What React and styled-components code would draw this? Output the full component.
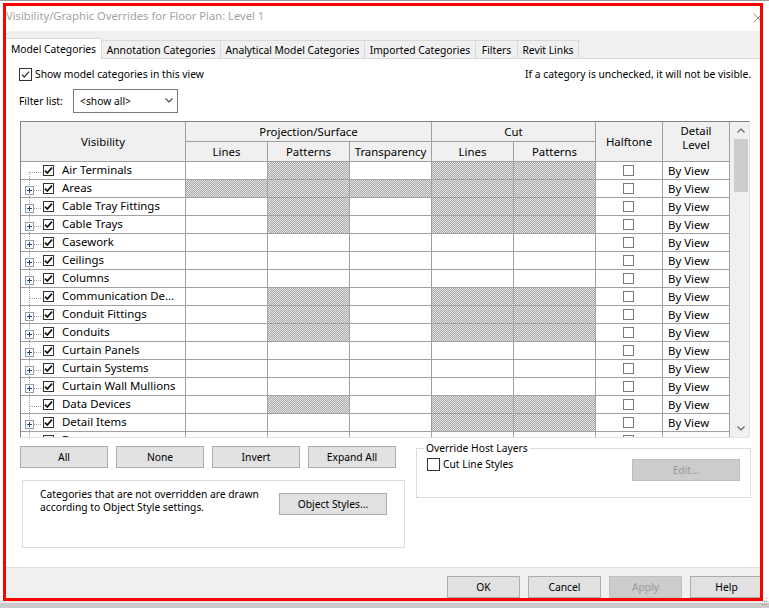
import React from 'react';
import styled, { createGlobalStyle } from 'styled-components';

const Global = createGlobalStyle`
  html, body { margin: 0; padding: 0; background: #fff; }
  body { font-family: "Noto Sans", "Liberation Sans", sans-serif; color: #000; }
  *, *::before, *::after { box-sizing: border-box; }
`;

const UI_FONT = '10.3px';
const GRID_FONT = '11.4px';

const Page = styled.div`
  position: relative;
  width: 769px;
  height: 608px;
  overflow: hidden;
  background: #fff;
  display: flex;
  flex-direction: column;
`;

const ScreenTop = styled.div`
  flex: none;
  height: 3px;
  border-top: 1px solid #9b9b9b;
`;

const ScreenBottom = styled.div`
  flex: 1;
  background: linear-gradient(#e6e6e6 0 2px, #cacaca 2px);
`;

const Dialog = styled.div`
  flex: none;
  margin-left: 3px;
  width: 760px;
  height: 598px;
  background: #fff;
  display: flex;
  flex-direction: column;
  font-size: ${UI_FONT};
`;

const TitleBar = styled.div`
  flex: none;
  height: 28px;
  display: flex;
  align-items: flex-start;
  justify-content: space-between;
  padding-left: 3px;
`;

const Title = styled.div`
  color: #a3a3a3;
  font-size: 11.2px;
  line-height: 14px;
  margin-top: 6px;
`;

const CloseIcon = styled.svg`
  margin-top: 10px;
  width: 10px;
  height: 10px;
`;

const TabStrip = styled.div`
  flex: none;
  height: 28px;
  background: #f0f0f0;
  border-bottom: 1px solid #d9d9d9;
  display: flex;
  align-items: flex-end;
`;

const Tab = styled.div`
  flex: none;
  width: ${p => p.$w}px;
  height: ${p => (p.$active ? 21 : 18)}px;
  margin-bottom: ${p => (p.$active ? -1 : 0)}px;
  background: ${p => (p.$active ? '#fff' : '#f0f0f0')};
  border-top: 1px solid #d9d9d9;
  border-right: 1px solid #d9d9d9;
  display: flex;
  align-items: center;
  justify-content: center;
  padding-top: ${p => (p.$active ? 0 : 1)}px;
  padding-left: ${p => (p.$active ? 3 : 0)}px;
  white-space: nowrap;
  line-height: 14px;
`;

const Content = styled.div`
  flex: 1;
  display: flex;
  flex-direction: column;
  padding: 0 12px 0 17px;
  background: #fff;
`;

const TopRow = styled.div`
  margin-top: 9px;
  height: 13px;
  display: flex;
  align-items: center;
  justify-content: space-between;
  line-height: 13px;
`;

const CheckLabel = styled.label`
  display: flex;
  align-items: center;
  gap: 3px;
  margin-left: -1px;
  white-space: nowrap;
`;

const Box = styled.span`
  flex: none;
  display: inline-flex;
  align-items: center;
  justify-content: center;
  width: ${p => p.$size}px;
  height: ${p => p.$size}px;
  border: 1px solid ${p => p.$border || '#333'};
  background: #fff;
`;

const HalftoneBox = styled(Box)`
  margin-right: 2px;
`;

const Note = styled.span`
  white-space: nowrap;
`;

const FilterRow = styled.div`
  margin-top: 8px;
  height: 24px;
  display: flex;
  align-items: center;
`;

const FilterLabel = styled.span`
  width: 54px;
  margin-left: -1px;
`;

const Select = styled.div`
  width: 105px;
  height: 24px;
  border: 1px solid #7a7a7a;
  display: flex;
  align-items: center;
  justify-content: space-between;
  padding: 0 4px 1px 6px;
`;

const TableFrame = styled.div`
  margin-top: 8px;
  width: 730px;
  height: 317px;
  border-top: 1px solid #828282;
  border-left: 1px solid #828282;
  border-right: 1px solid #e3e3e3;
  border-bottom: 1px solid #e3e3e3;
  display: flex;
  overflow: hidden;
`;

const Grid = styled.div`
  flex: none;
  width: 709px;
  height: 315px;
  overflow: hidden;
  display: grid;
  grid-template-columns: 164px repeat(5, 81px) 66px 66px;
  grid-template-rows: 19px 19px;
  grid-auto-rows: 17px;
  gap: 1px;
  align-content: start;
  background: #a0a0a0;
  border-right: 1px solid #a0a0a0;
  font-size: ${GRID_FONT};
`;

const HeadCell = styled.div`
  grid-column: ${p => p.$col || 'auto'};
  grid-row: ${p => p.$row || 'auto'};
  background: #f0f0f0;
  display: flex;
  align-items: center;
  justify-content: center;
  text-align: center;
  line-height: 14px;
  white-space: nowrap;
  padding-bottom: ${p => p.$lift || 0}px;
`;

const Cell = styled.div`
  background: ${p =>
    p.$hatch
      ? 'repeating-conic-gradient(#a9a9a9 0 25%, #e4e4e4 0 50%) 0 0 / 2px 2px'
      : '#fff'};
  display: flex;
  align-items: center;
  justify-content: ${p => p.$justify || 'flex-start'};
  padding-left: ${p => p.$pad || 0}px;
  white-space: nowrap;
  overflow: hidden;
  line-height: 14px;
`;

const TreeIcon = styled.svg`
  flex: none;
  width: 22px;
  height: 17px;
  align-self: flex-start;
`;

const RowCheck = styled(Box)`
  margin-top: -1px;
`;

const RowName = styled.span`
  margin-left: 8px;
  padding-bottom: 1px;
`;

const Scrollbar = styled.div`
  flex: 1;
  background: #f0f0f0;
  display: flex;
  flex-direction: column;
  align-items: center;
`;

const ArrowZone = styled.div`
  flex: none;
  height: 17px;
  width: 100%;
  display: flex;
  align-items: center;
  justify-content: center;
  padding-left: 2px;
`;

const Thumb = styled.div`
  flex: none;
  width: 14px;
  height: 53px;
  margin-left: 3px;
  background: #cdcdcd;
`;

const Spacer = styled.div`
  flex: 1;
`;

const BottomArea = styled.div`
  margin-top: 8px;
  display: flex;
  align-items: flex-start;
`;

const LeftCol = styled.div`
  width: 385px;
  display: flex;
  flex-direction: column;
`;

const ButtonRow = styled.div`
  display: flex;
  gap: 8px;
`;

const Button = styled.div`
  flex: none;
  width: ${p => p.$w || 88}px;
  height: 22px;
  background: ${p => (p.$disabled ? '#cccccc' : '#e1e1e1')};
  border: 1px solid ${p => (p.$disabled ? '#bfbfbf' : '#adadad')};
  color: ${p => (p.$disabled ? '#9a9a9a' : '#000')};
  display: flex;
  align-items: center;
  justify-content: center;
  white-space: nowrap;
  padding-bottom: 1px;
`;

const InfoBox = styled.div`
  margin: 12px 0 0 2px;
  width: 383px;
  height: 68px;
  border: 1px solid #dcdcdc;
  display: flex;
  align-items: flex-start;
  padding: 7px 0 0 17px;
`;

const InfoText = styled.div`
  width: 239px;
  line-height: 13px;
`;

const InfoButton = styled(Button)`
  margin-top: 5px;
`;

const GroupBox = styled.div`
  position: relative;
  margin: 2px 0 0 11px;
  width: 335px;
  height: 50px;
  border: 1px solid #dcdcdc;
  display: flex;
  align-items: flex-start;
  justify-content: space-between;
  padding: 9px 10px 0 10px;
`;

const Legend = styled.span`
  position: absolute;
  top: -8px;
  left: 7px;
  padding: 0 2px;
  background: #fff;
  line-height: 14px;
  white-space: nowrap;
`;

const GroupCheck = styled(CheckLabel)`
  margin-left: 0;
  line-height: 13px;
`;

const GroupButton = styled(Button)`
  margin-top: 1px;
`;

const Footer = styled.div`
  flex: none;
  height: 34px;
  border-top: 1px solid #dfdfdf;
  background: #f0f0f0;
  display: flex;
  justify-content: flex-end;
  gap: 8px;
  padding-top: 8px;
`;

const RedFrame = styled.div`
  position: absolute;
  left: 3px;
  top: 3px;
  width: 760px;
  height: 598px;
  border: 3px solid #ff0000;
  pointer-events: none;
`;

const Grip = styled.svg`
  position: absolute;
  right: 0;
  bottom: 1px;
  width: 8px;
  height: 10px;
`;

const CheckMark = ({ color = '#111', w = 1.7 }) => (
  <svg width="9" height="9" viewBox="0 0 9 9">
    <polyline points="1,4.6 3.3,7 8,1.6" fill="none" stroke={color} strokeWidth={w} />
  </svg>
);

const Chevron = ({ up, w = 8, color = '#555' }) => (
  <svg width={w} height="5" viewBox="0 0 8 5">
    <polyline
      points={up ? '0.5,4.5 4,1 7.5,4.5' : '0.5,0.5 4,4 7.5,0.5'}
      fill="none"
      stroke={color}
      strokeWidth="1.1"
    />
  </svg>
);

const Tree = ({ plus, first }) => (
  <TreeIcon viewBox="0 0 22 17" shapeRendering="crispEdges">
    <line x1="8.5" y1={first ? 10 : 0} x2="8.5" y2="17" stroke="#a0a0a0" strokeDasharray="1 1" />
    <line x1="9" y1="10.5" x2="21" y2="10.5" stroke="#a0a0a0" strokeDasharray="1 1" />
    {plus && (
      <g>
        <rect x="4.5" y="6.5" width="8" height="8" fill="#fff" stroke="#8f9bb0" />
        <line x1="6" y1="10.5" x2="11" y2="10.5" stroke="#2b3f8f" />
        <line x1="8.5" y1="8" x2="8.5" y2="13" stroke="#2b3f8f" />
      </g>
    )}
  </TreeIcon>
);

const tabs = [
  { label: 'Model Categories', w: 99, active: true },
  { label: 'Annotation Categories', w: 119 },
  { label: 'Analytical Model Categories', w: 144 },
  { label: 'Imported Categories', w: 111 },
  { label: 'Filters', w: 42 },
  { label: 'Revit Links', w: 61 },
];

const P = [0, 1, 0, 1, 1];
const N = [0, 0, 0, 0, 0];
const rows = [
  { name: 'Air Terminals', plus: false, first: true, hatch: P },
  { name: 'Areas', plus: true, hatch: [1, 1, 1, 1, 1] },
  { name: 'Cable Tray Fittings', plus: true, hatch: P },
  { name: 'Cable Trays', plus: true, hatch: P },
  { name: 'Casework', plus: true, hatch: N },
  { name: 'Ceilings', plus: true, hatch: N },
  { name: 'Columns', plus: true, hatch: N },
  { name: 'Communication De...', plus: false, hatch: P },
  { name: 'Conduit Fittings', plus: true, hatch: P },
  { name: 'Conduits', plus: true, hatch: P },
  { name: 'Curtain Panels', plus: true, hatch: N },
  { name: 'Curtain Systems', plus: true, hatch: N },
  { name: 'Curtain Wall Mullions', plus: true, hatch: N },
  { name: 'Data Devices', plus: false, hatch: P },
  { name: 'Detail Items', plus: true, hatch: [0, 0, 0, 1, 1] },
  { name: 'Doors', plus: true, hatch: N },
];

export default function App() {
  return (
    <>
      <Global />
      <Page>
        <ScreenTop />
        <Dialog>
          <TitleBar>
            <Title>Visibility/Graphic Overrides for Floor Plan: Level 1</Title>
            <CloseIcon viewBox="0 0 10 10">
              <path d="M0.5 0.5 L9.5 9.5 M9.5 0.5 L0.5 9.5" stroke="#8a8a8a" strokeWidth="1" />
            </CloseIcon>
          </TitleBar>

          <TabStrip>
            {tabs.map(t => (
              <Tab key={t.label} $w={t.w} $active={t.active}>
                {t.label}
              </Tab>
            ))}
          </TabStrip>

          <Content>
            <TopRow>
              <CheckLabel>
                <Box $size={13}>
                  <CheckMark color="#333" w={1.3} />
                </Box>
                Show model categories in this view
              </CheckLabel>
              <Note>If a category is unchecked, it will not be visible.</Note>
            </TopRow>

            <FilterRow>
              <FilterLabel>Filter list:</FilterLabel>
              <Select>
                <span>&lt;show all&gt;</span>
                <Chevron w={8} color="#444" />
              </Select>
            </FilterRow>

            <TableFrame>
              <Grid>
                <HeadCell $col="1" $row="1 / span 2">Visibility</HeadCell>
                <HeadCell $col="2 / span 3" $row="1">Projection/Surface</HeadCell>
                <HeadCell $col="5 / span 2" $row="1">Cut</HeadCell>
                <HeadCell $col="7" $row="1 / span 2">Halftone</HeadCell>
                <HeadCell $col="8" $row="1 / span 2" $lift={8}>
                  Detail
                  <br />
                  Level
                </HeadCell>
                <HeadCell $col="2" $row="2">Lines</HeadCell>
                <HeadCell $col="3" $row="2">Patterns</HeadCell>
                <HeadCell $col="4" $row="2">Transparency</HeadCell>
                <HeadCell $col="5" $row="2">Lines</HeadCell>
                <HeadCell $col="6" $row="2">Patterns</HeadCell>

                {rows.map(r => (
                  <React.Fragment key={r.name}>
                    <Cell>
                      <Tree plus={r.plus} first={r.first} />
                      <RowCheck $size={11}>
                        <CheckMark />
                      </RowCheck>
                      <RowName>{r.name}</RowName>
                    </Cell>
                    {r.hatch.map((h, i) => (
                      <Cell key={i} $hatch={!!h} />
                    ))}
                    <Cell $justify="center">
                      <HalftoneBox $size={11} $border="#7a7a7a" />
                    </Cell>
                    <Cell $pad={5}>By View</Cell>
                  </React.Fragment>
                ))}
              </Grid>
              <Scrollbar>
                <ArrowZone>
                  <Chevron up w={8} color="#606060" />
                </ArrowZone>
                <Thumb />
                <Spacer />
                <ArrowZone>
                  <Chevron w={8} color="#606060" />
                </ArrowZone>
              </Scrollbar>
            </TableFrame>

            <BottomArea>
              <LeftCol>
                <ButtonRow>
                  <Button>All</Button>
                  <Button>None</Button>
                  <Button>Invert</Button>
                  <Button>Expand All</Button>
                </ButtonRow>
                <InfoBox>
                  <InfoText>
                    Categories that are not overridden are drawn according to Object Style settings.
                  </InfoText>
                  <InfoButton $w={108}>Object Styles...</InfoButton>
                </InfoBox>
              </LeftCol>
              <GroupBox>
                <Legend>Override Host Layers</Legend>
                <GroupCheck>
                  <Box $size={13} />
                  Cut Line Styles
                </GroupCheck>
                <GroupButton $w={108} $disabled>
                  Edit...
                </GroupButton>
              </GroupBox>
            </BottomArea>
          </Content>

          <Footer>
            <Button $w={73}>OK</Button>
            <Button $w={73}>Cancel</Button>
            <Button $w={73} $disabled>
              Apply
            </Button>
            <Button $w={73}>Help</Button>
          </Footer>
        </Dialog>
        <ScreenBottom />
        <RedFrame />
        <Grip viewBox="0 0 8 10" shapeRendering="crispEdges">
          <rect x="5" y="1" width="1" height="1" fill="#9a9a9a" />
          <rect x="3" y="4" width="1" height="1" fill="#9a9a9a" />
          <rect x="5" y="4" width="1" height="1" fill="#9a9a9a" />
          <rect x="1" y="7" width="1" height="1" fill="#9a9a9a" />
          <rect x="3" y="7" width="1" height="1" fill="#9a9a9a" />
          <rect x="5" y="7" width="1" height="1" fill="#9a9a9a" />
        </Grip>
      </Page>
    </>
  );
}
